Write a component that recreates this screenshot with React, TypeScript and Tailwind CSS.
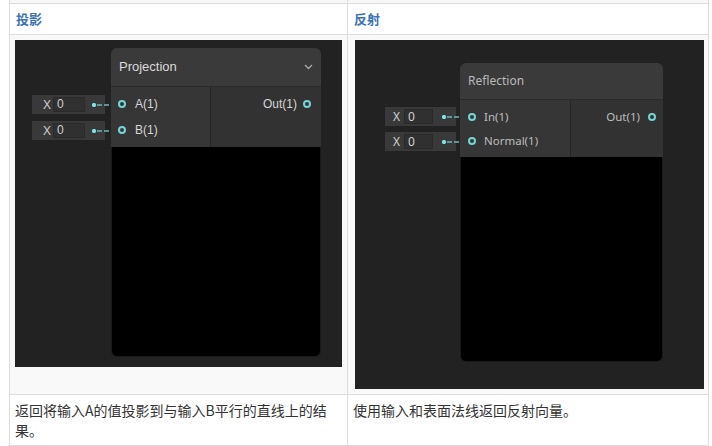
import React from 'react';

/* ─── Node-graph preview ─────────────────────────────────────────── */
type NodeSpec = {
  title: string;
  chevron?: boolean;
  inputs: string[];
  // every class below is a full literal so Tailwind picks it up
  canvas: string;
  text: string;
  node: string;
  header: string;
  body: string;
  inCol: string;
  inRows: string;
  outRow: string;
  preview: string;
  stack: string;
  box: string;
  xLabel: string;
  field: string;
  wire: string;
};

function Port() {
  return <span className="h-[8px] w-[8px] shrink-0 rounded-full border-2 border-[#74d5d5]" />;
}

function Wire({ className }: { className: string }) {
  return (
    <svg className={'absolute top-[6px] h-[8px] w-[27px] ' + className} viewBox="0 0 27 8">
      <line x1="3" y1="4" x2="27" y2="4" stroke="#6cb8b8" strokeWidth="1.5" strokeDasharray="8 2 5 2" />
      <circle cx="3" cy="4" r="2.7" fill="#84dede" stroke="#1b1b1b" strokeWidth="0.8" />
    </svg>
  );
}

function NodePreview({ spec }: { spec: NodeSpec }) {
  return (
    <div className={'relative shrink-0 overflow-hidden bg-[#222222] ' + spec.canvas}>
      {/* inline value fields wired to the input ports */}
      <div className={'absolute flex flex-col ' + spec.stack}>
        {spec.inputs.map((label) => (
          <div key={label} className={'relative flex h-[19px] items-center bg-[#393939] text-[12px] text-[#cfcfcf] ' + spec.box}>
            <span className={spec.xLabel}>X</span>
            <div className={'h-[15px] border border-[#2a2a2a] bg-[#303030] pl-[3px] leading-[13px] ' + spec.field}>0</div>
            <Wire className={spec.wire} />
          </div>
        ))}
      </div>

      {/* node */}
      <div className={'absolute flex flex-col overflow-hidden rounded-[6px] ' + spec.node}>
        <div className={'flex items-center justify-between border-b border-[#2a2a2a] bg-[#3a3a3a] px-[8px] ' + spec.header}>
          <span>{spec.title}</span>
          {spec.chevron && (
            <svg width="9" height="6" viewBox="0 0 9 6">
              <polyline points="1,1 4.5,4.5 8,1" fill="none" stroke="#a8a8a8" strokeWidth="1.3" />
            </svg>
          )}
        </div>
        <div className={'flex bg-[#323232] ' + spec.body}>
          <div className={'flex flex-col border-r border-[#262626] bg-[#363636] ' + spec.inCol}>
            {spec.inputs.map((label) => (
              <div key={label} className={'flex h-[14px] items-center ' + spec.inRows}>
                <Port />
                <span>{label}</span>
              </div>
            ))}
          </div>
          <div className="flex-1">
            <div className={'flex h-[14px] items-center justify-end ' + spec.outRow}>
              <span>Out(1)</span>
              <Port />
            </div>
          </div>
        </div>
        <div className={'rounded-b-[6px] border border-t-0 border-[#1a1a1a] bg-black ' + spec.preview} />
      </div>
    </div>
  );
}

const projection: NodeSpec = {
  title: 'Projection',
  chevron: true,
  inputs: ['A(1)', 'B(1)'],
  canvas: "h-[327px] w-[327px] font-['Liberation_Sans',Arial,sans-serif]",
  text: '',
  node: 'left-[96px] top-[8px] w-[210px] text-[12px] text-[#d6d6d6]',
  header: 'h-[39px] text-[13px] text-[#dadada]',
  body: 'h-[60px]',
  inCol: 'w-[100px] gap-[12px] pt-[10px]',
  inRows: 'gap-[9px] pl-[7px]',
  outRow: 'mt-[10px] gap-[6px] pr-[10px]',
  preview: 'h-[210px]',
  stack: 'left-[17px] top-[55px] gap-[7px]',
  box: 'w-[73px] pl-[11px]',
  xLabel: 'w-[10px]',
  field: 'w-[32px]',
  wire: 'left-[59px]',
};

const reflection: NodeSpec = {
  title: 'Reflection',
  inputs: ['In(1)', 'Normal(1)'],
  canvas: "h-[349px] w-[349px] font-['Noto_Sans','Open_Sans',sans-serif]",
  text: '',
  node: 'left-[105px] top-[23px] w-[203px] text-[11.5px] text-[#bdbdbd]',
  header: 'h-[37px] text-[12px] text-[#b9b9b9]',
  body: 'h-[57px]',
  inCol: 'w-[111px] gap-[10px] pt-[10px]',
  inRows: 'gap-[8px] pl-[8px]',
  outRow: 'mt-[10px] gap-[8px] pr-[7px]',
  preview: 'h-[205px]',
  stack: 'left-[30px] top-[67px] gap-[6px]',
  box: 'w-[71px] pl-[8px]',
  xLabel: 'w-[11px]',
  field: 'w-[29px]',
  wire: 'left-[56px]',
};

/* ─── Page ───────────────────────────────────────────────────────── */
export default function App() {
  return (
    <div className="h-[446px] w-[712px] overflow-hidden bg-white font-['Noto_Sans_CJK_SC','Liberation_Sans',sans-serif]">
      <div className="-mt-px ml-[9px] grid w-[700px] grid-cols-[337px_360px] gap-px border border-[#dddddd] bg-[#dddddd]">
        {/* tail of the previous row */}
        <div className="h-[3px] bg-[#f7f7f7]" />
        <div className="h-[3px] bg-[#f7f7f7]" />

        <div className="flex h-[30px] items-center bg-white pl-[6px] text-[13px] font-bold text-[#3b73b9]">投影</div>
        <div className="flex h-[30px] items-center bg-white pl-[6px] text-[13px] font-bold text-[#3b73b9]">反射</div>

        <div className="h-[359px] bg-[#f9f9f9] pl-[5px] pt-[5px]">
          <NodePreview spec={projection} />
        </div>
        <div className="h-[359px] bg-[#f9f9f9] pl-[7px] pt-[5px]">
          <NodePreview spec={reflection} />
        </div>

        <div className="h-[50px] bg-white pl-[5px] pr-[4px] pt-[5px] text-[14px] leading-[20px] text-[#333333]">
          返回将输入A的值投影到与输入B平行的直线上的结果。
        </div>
        <div className="h-[50px] bg-white pl-[5px] pt-[5px] text-[14px] leading-[20px] text-[#333333]">
          使用输入和表面法线返回反射向量。
        </div>
      </div>
    </div>
  );
}
